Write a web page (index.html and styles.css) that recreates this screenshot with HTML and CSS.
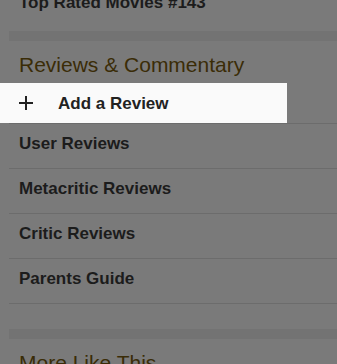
FILE: index.html
```html
<!DOCTYPE html>
<html lang="en">
<head>
  <meta charset="UTF-8" />
  <meta name="viewport" content="width=device-width, initial-scale=1" />
  <title>Reviews &amp; Commentary</title>
  <link rel="stylesheet" href="styles.css">
</head>
<body>

  <div class="page">
    <div class="item item-top">Top Rated Movies #143</div>

    <div class="band"></div>

    <h2 class="section-title">Reviews &amp; Commentary</h2>

    <!-- highlighted item -->
    <div class="spotlight">
      <svg class="plus" viewBox="0 0 14 14" xmlns="http://www.w3.org/2000/svg">
        <path d="M7 0V14M0 7H14" stroke="#222" stroke-width="2"/>
      </svg>
      <span class="spotlight-text">Add a Review</span>
    </div>
    <div class="rule"></div>

    <div class="item">User Reviews</div>
    <div class="item">Metacritic Reviews</div>
    <div class="item">Critic Reviews</div>
    <div class="item">Parents Guide</div>

    <div class="gap"></div>
    <div class="band"></div>

    <h2 class="section-title">More Like This</h2>
  </div>

</body>
</html>
```

FILE: styles.css
```css
body {
  margin: 0;
  background-color: #7a7a7a;
  font-family: "Liberation Sans", Arial, sans-serif;
  color: #1c1c1c;
  overflow: hidden;
}

.page {
  display: flex;
  flex-direction: column;
  margin-top: -17px; /* list is scrolled, top item cut off */
}

.item {
  margin-left: 9px;
  padding: 10px 0 0 10px;
  height: 34px;
  line-height: 20px;
  font-size: 17px;
  font-weight: bold;
  border-bottom: 1px solid #6c6c6c;
}

.item-top {
  height: 38px;
  border-bottom: none;
}

.band {
  margin-left: 9px;
  height: 10px;
  background-color: #737373;
}

.section-title {
  margin: 0 0 0 19px;
  padding: 12px 0 6px;
  font-size: 21px;
  line-height: 24px;
  font-weight: normal;
  color: #3a2c07;
}

.spotlight {
  width: 287px;
  height: 40px;
  background-color: #fafafa;
  display: flex;
  align-items: center;
  color: #222;
}

.plus {
  width: 14px;
  height: 14px;
  margin-left: 19px;
}

.spotlight-text {
  margin-left: 25px;
  padding-top: 2px;
  font-size: 17px;
  font-weight: bold;
}

.rule {
  margin-left: 9px;
  height: 1px;
  background-color: #6c6c6c;
}

.gap {
  height: 25px;
}
```
